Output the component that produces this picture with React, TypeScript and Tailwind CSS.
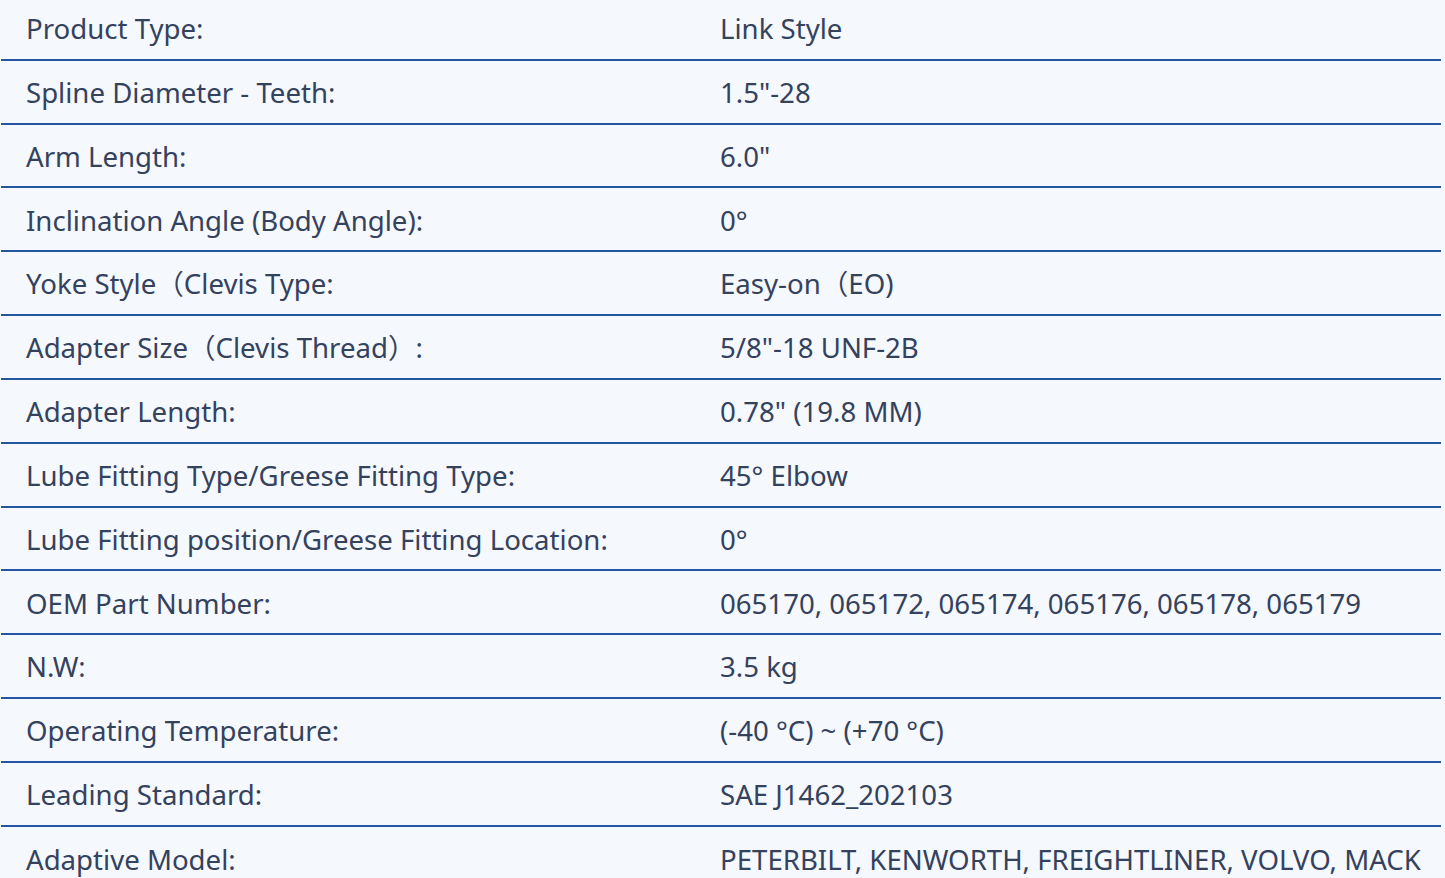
import React from 'react';

// Spec table — product attributes
const specs: [string, string][] = [
  ['Product Type:', 'Link Style'],
  ['Spline Diameter - Teeth:', '1.5"-28'],
  ['Arm Length:', '6.0"'],
  ['Inclination Angle (Body Angle):', '0°'],
  ['Yoke Style（Clevis Type:', 'Easy-on（EO)'],
  ['Adapter Size（Clevis Thread）:', '5/8"-18 UNF-2B'],
  ['Adapter Length:', '0.78" (19.8 MM)'],
  ['Lube Fitting Type/Greese Fitting Type:', '45° Elbow'],
  ['Lube Fitting position/Greese Fitting Location:', '0°'],
  ['OEM Part Number:', '065170, 065172, 065174, 065176, 065178, 065179'],
  ['N.W:', '3.5 kg'],
  ['Operating Temperature:', '(-40 °C) ~ (+70 °C)'],
  ['Leading Standard:', 'SAE J1462_202103'],
  ['Adaptive Model:', 'PETERBILT, KENWORTH, FREIGHTLINER, VOLVO, MACK'],
];

export default function App() {
  return (
    <div
      className="w-[1445px] h-[878px] overflow-hidden bg-[#f5f8fd] text-[#34425e]"
      style={{ fontFamily: '"Noto Sans", "Noto Sans CJK SC", sans-serif' }}
    >
      <div className="mt-[-3px] ml-px w-[1440px]">
        {specs.map(([label, value], i) => (
          <div
            key={i}
            className={
              'flex items-center h-[63.83px] pt-[2px] text-[27.6px] leading-none ' +
              (i < specs.length - 1 ? 'border-b-2 border-[#2356a0]' : '')
            }
          >
            <div className="w-[719px] pl-[25px]">{label}</div>
            <div className="flex-1">{value}</div>
          </div>
        ))}
      </div>
    </div>
  );
}
